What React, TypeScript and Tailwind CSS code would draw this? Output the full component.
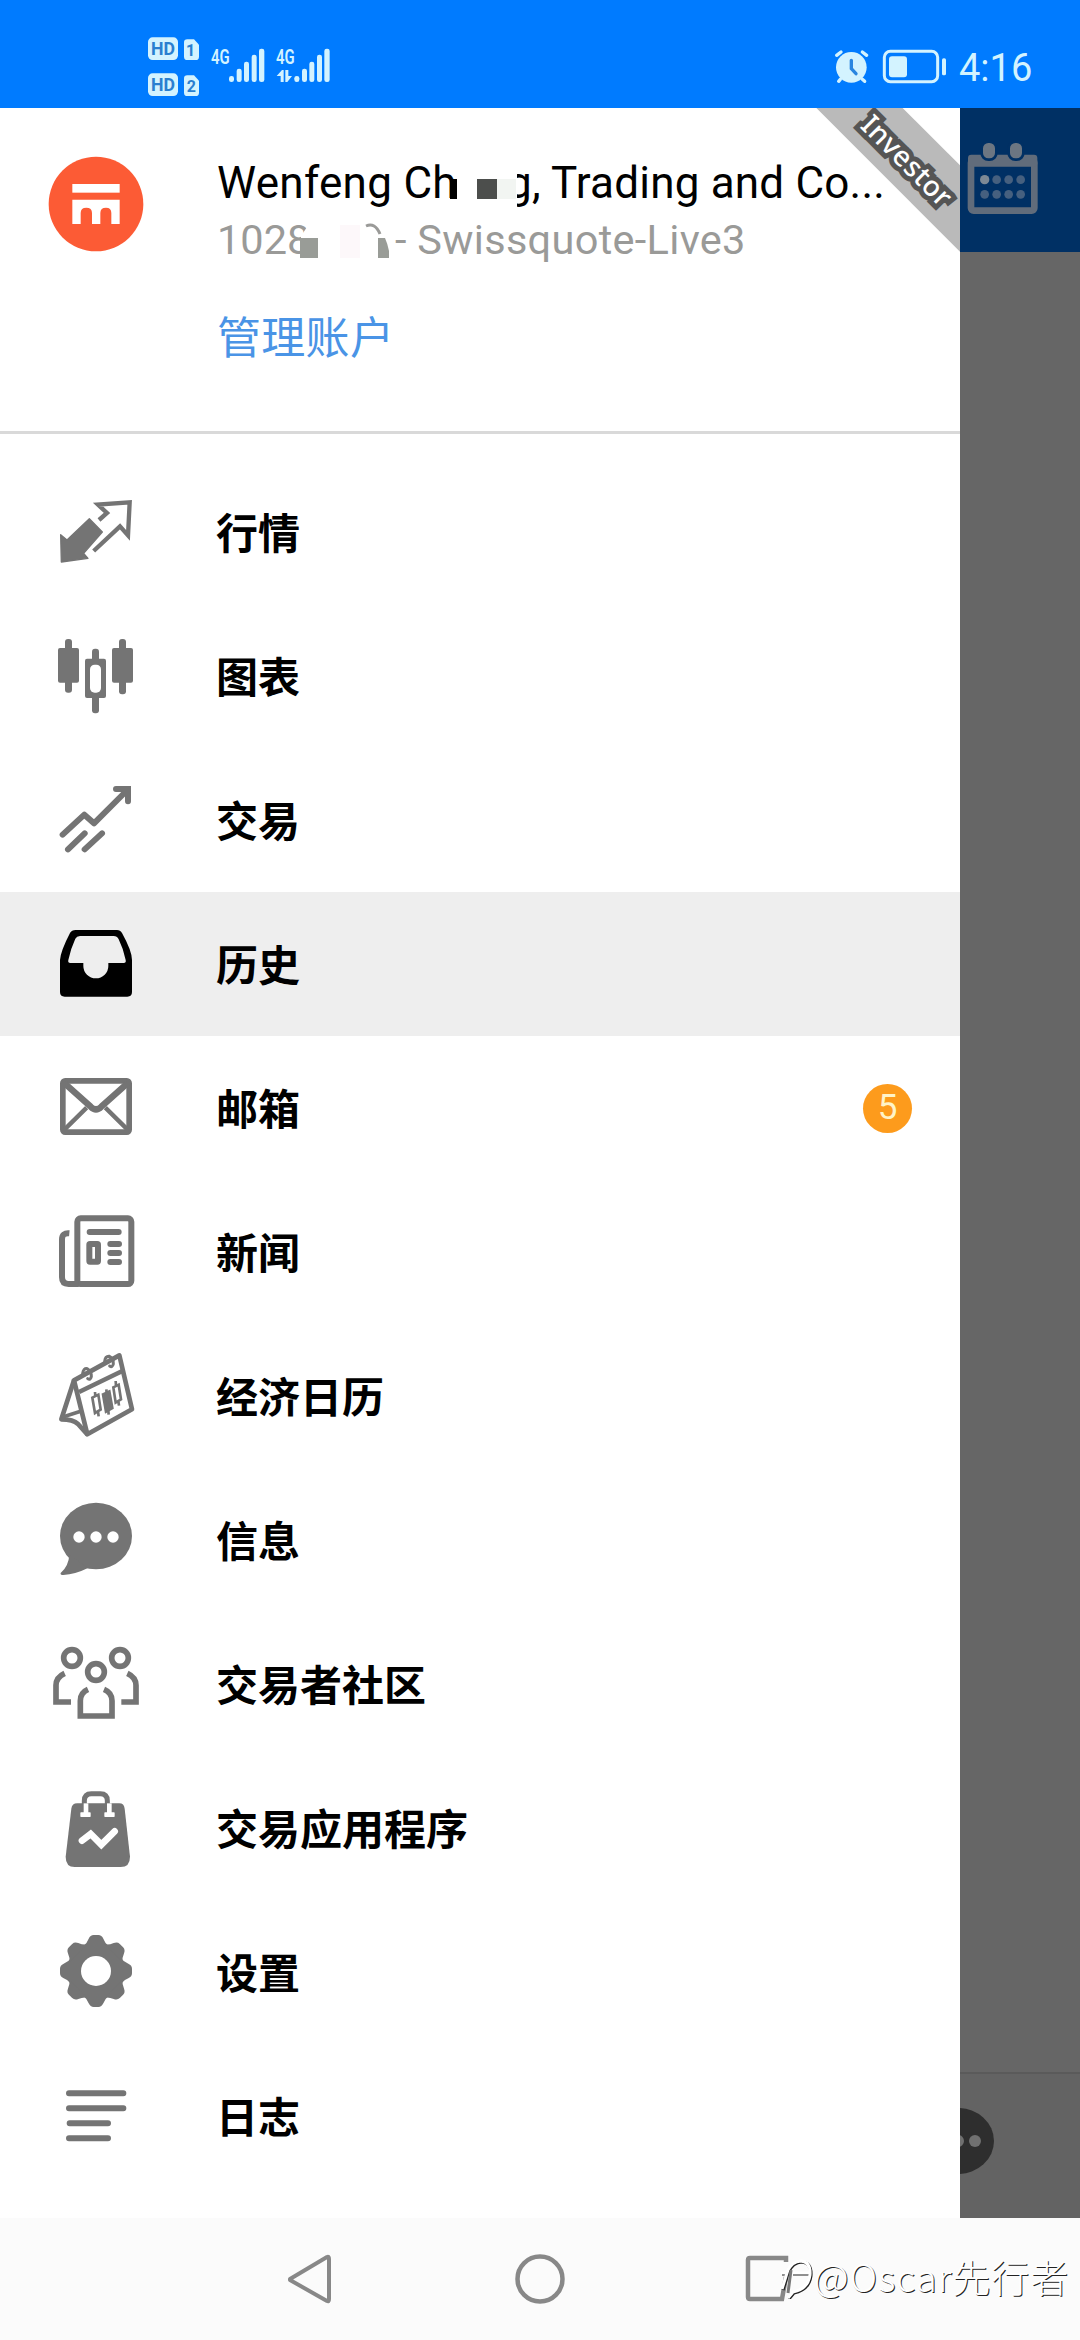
import React from 'react';

type IconProps = { children: React.ReactNode };

const Icon: React.FC<IconProps> = ({ children }) => (
  <svg viewBox="0 0 288 288" className="w-24 h-24 shrink-0" fill="currentColor">
    {children}
  </svg>
);

const QuotesIcon = () => (
  <Icon>
    <path d="M38 152 L57 168 L124 104 L163 144 L107 208 L120 223 L40 234 Z" stroke="currentColor" strokeWidth="4" strokeLinejoin="round" />
    <path d="M153 108 L177 87 L150 62 L245 55 L240 154 L216 127 L137 201" fill="none" stroke="currentColor" strokeWidth="13" />
  </Icon>
);

const ChartIcon = () => (
  <Icon>
    <rect x="30" y="60" width="63" height="104" rx="6" />
    <rect x="51" y="33" width="21" height="161" rx="9" />
    <rect x="111" y="92" width="63" height="118" rx="6" />
    <rect x="132" y="62" width="21" height="194" rx="9" />
    <rect x="126" y="110" width="33" height="84" rx="14" fill="#fff" />
    <rect x="192" y="60" width="63" height="104" rx="6" />
    <rect x="213" y="33" width="21" height="166" rx="9" />
  </Icon>
);

const TradeIcon = () => (
  <Icon>
    <g fill="none" stroke="currentColor" strokeWidth="18" strokeLinecap="round">
      <path d="M44 188 L109 128 L138 154 L238 54" strokeLinejoin="round" />
      <path d="M204 51 H240 V88" />
      <path d="M60 232 L110 184 M110 232 L162 184" />
    </g>
  </Icon>
);

const HistoryIcon = () => (
  <Icon>
    <path
      fillRule="evenodd"
      d="M83 42 H207 Q217 42 222 51 Q252 105 252 132 V228 Q252 242 238 242 H50 Q36 242 36 228 V132 Q38 105 66 51 Q71 42 83 42 Z M96 60 Q86 60 82 68 Q68 98 61 132 Q59 141 67 141 H106 V150 A37.5 37 0 0 0 181 150 V141 H227 Q235 141 233 132 Q226 98 212 70 Q207 60 197 60 Z"
    />
  </Icon>
);

const MailIcon = () => (
  <Icon>
    <g fill="none" stroke="currentColor">
      <rect x="44.5" y="62.5" width="199" height="154" rx="7" strokeWidth="17" />
      <path d="M50 70 L128 140 Q144 156 160 140 L238 70" strokeWidth="19" />
      <path d="M116 143 L50 208 M172 143 L238 208" strokeWidth="13" />
    </g>
  </Icon>
);

const NewsIcon = () => (
  <Icon>
    <g fill="none" stroke="currentColor" strokeWidth="18">
      <rect x="88" y="43" width="162" height="197" rx="10" />
      <path d="M64 88 Q42 86 42 106 V220 Q42 240 62 240 H92" />
      <path d="M125 84 H212 M187 120 H213 M187 147 H213 M187 174 H213" strokeLinecap="round" />
      <rect x="124" y="120" width="26" height="53" rx="2" />
    </g>
  </Icon>
);

const CalendarIcon = () => (
  <Icon>
    <g fill="none" stroke="currentColor" strokeWidth="14" strokeLinejoin="round">
      <path d="M78 97 L214 22 L252 184 L118 259 Z" />
      <path d="M93 132 L223 69" />
      <path d="M78 97 L40 214 Q76 214 90 228 L118 259" />
      <path d="M42 208 L98 190" strokeWidth="11" />
    </g>
    <g fill="none" stroke="currentColor" strokeWidth="9" strokeLinecap="round">
      <path d="M104 76 Q106 60 118 62 Q131 70 130 86 Q127 98 119 92" />
      <path d="M170 40 Q172 24 184 25 Q197 32 196 48 Q193 60 185 54" />
    </g>
    <g fill="none" stroke="currentColor" strokeWidth="8">
      <path d="M133 149 L151 140 L158 185 L141 195 Z M141 132 L142 144 M150 190 L152 205" />
      <path d="M165 139 L184 130 L193 180 L174 191 Z" fill="currentColor" />
      <path d="M175 124 L182 200" />
      <path d="M196 118 L212 110 L219 154 L203 164 Z M203 99 L204 114 M211 159 L213 173" />
    </g>
  </Icon>
);

const MessageIcon = () => (
  <Icon>
    <ellipse cx="144" cy="132" rx="108" ry="100" />
    <path d="M64 188 Q62 222 38 243 Q36 249 46 249 Q82 247 120 228 Z" />
    <g fill="#fff">
      <circle cx="93" cy="135" r="17" />
      <circle cx="144" cy="135" r="17" />
      <circle cx="195" cy="135" r="17" />
    </g>
  </Icon>
);

const CommunityIcon = () => (
  <Icon>
    <g fill="none" stroke="currentColor" strokeWidth="17">
      <circle cx="72" cy="66" r="25" />
      <circle cx="216" cy="66" r="25" />
      <circle cx="144" cy="108" r="25" />
      <path d="M50 112 Q24 124 24 148 V198 H69" />
      <path d="M238 112 Q264 124 264 148 V198 H220" />
      <path d="M120 160 Q97 170 97 194 V240 H192 V194 Q192 170 168 160" />
    </g>
  </Icon>
);

const AppsIcon = () => (
  <Icon>
    <path d="M88 70 H214 Q228 70 230 86 L246 230 Q246 261 218 261 H80 Q53 261 53 230 L70 86 Q72 70 88 70 Z" />
    <path d="M109 72 V62 Q109 41 130 41 H157 Q178 41 178 62 V72" fill="none" stroke="currentColor" strokeWidth="15" />
    <g fill="#fff">
      <rect x="107" y="70" width="14" height="30" />
      <rect x="97" y="97" width="31" height="14" rx="2" />
      <rect x="177" y="70" width="14" height="30" />
      <rect x="169" y="97" width="31" height="14" rx="2" />
    </g>
    <path d="M102 182 L128 162 L160 194 L200 154" fill="none" stroke="#fff" strokeWidth="20" strokeLinecap="round" />
  </Icon>
);

const SettingsIcon = () => (
  <Icon>
    <circle cx="144" cy="141" r="85" />
    {[0, 45, 90, 135, 180, 225, 270, 315].map((deg) => (
      <path
        key={deg}
        d="M106 66 Q117 58 122 44 Q127 33 137 33 H151 Q161 33 166 44 Q171 58 182 66 Z"
        transform={`rotate(${deg} 144 141)`}
      />
    ))}
    <circle cx="144" cy="141" r="45" fill="#fff" />
  </Icon>
);

const JournalIcon = () => (
  <Icon>
    <path
      d="M63 76 H226 M63 121 H226 M65 166 H180 M63 211 H180"
      stroke="currentColor"
      strokeWidth="18"
      strokeLinecap="round"
    />
  </Icon>
);

const MENU = [
  { label: '行情', icon: QuotesIcon },
  { label: '图表', icon: ChartIcon },
  { label: '交易', icon: TradeIcon },
  { label: '历史', icon: HistoryIcon, active: true },
  { label: '邮箱', icon: MailIcon, badge: 5 },
  { label: '新闻', icon: NewsIcon },
  { label: '经济日历', icon: CalendarIcon },
  { label: '信息', icon: MessageIcon },
  { label: '交易者社区', icon: CommunityIcon },
  { label: '交易应用程序', icon: AppsIcon },
  { label: '设置', icon: SettingsIcon },
  { label: '日志', icon: JournalIcon },
];

const StatusBar = () => (
  <div className="h-[108px] bg-[#007bff] text-[#d3f3ff] flex items-start justify-between pl-[120px] pr-[50px] pt-5">
    <svg viewBox="0 0 720 264" className="w-60 h-[88px]" fill="currentColor">
      <rect x="84" y="52" width="90" height="68" rx="14" />
      <rect x="84" y="160" width="90" height="68" rx="14" />
      <path d="M202 58 H222 L237 74 V110 Q237 120 227 120 H202 Q192 120 192 110 V68 Q192 58 202 58 Z" />
      <path d="M202 166 H222 L237 182 V218 Q237 228 227 228 H202 Q192 228 192 218 V176 Q192 166 202 166 Z" />
      <g fill="#2a7fd0" fontFamily="Roboto, sans-serif" fontWeight="700" textAnchor="middle">
        <text x="129" y="105" fontSize="54" textLength="72" lengthAdjust="spacingAndGlyphs">HD</text>
        <text x="129" y="213" fontSize="54" textLength="72" lengthAdjust="spacingAndGlyphs">HD</text>
        <text x="212" y="108" fontSize="48">1</text>
        <text x="214" y="216" fontSize="48">2</text>
      </g>
      <g fontFamily="Roboto, sans-serif" fontWeight="600" fontSize="58">
        <text x="273" y="131" textLength="56" lengthAdjust="spacingAndGlyphs">4G</text>
        <text x="468" y="131" textLength="56" lengthAdjust="spacingAndGlyphs">4G</text>
      </g>
      {[0, 196].map((dx) => (
        <g key={dx} transform={`translate(${dx} 0)`}>
          <rect x="327" y="168" width="15" height="18" rx="7" />
          <rect x="350" y="146" width="15" height="40" rx="7" />
          <rect x="372" y="125" width="15" height="61" rx="7" />
          <rect x="395" y="104" width="15" height="82" rx="7" />
          <rect x="417" y="86" width="16" height="100" rx="7" />
        </g>
      ))}
      <path d="M470 168 L486 150 H491 V186 H482 V168 Z M496 150 H505 V168 H516 L502 186 H496 Z" />
    </svg>
    <div className="flex items-start gap-[7px] mt-7">
      <svg viewBox="0 0 360 120" className="w-[120px] h-10" fill="currentColor">
        <circle cx="58" cy="58" r="46" />
        <g fill="none" stroke="currentColor" strokeWidth="10" strokeLinecap="round">
          <path d="M14 22 L27 12 M91 12 L104 22 M25 94 L20 100 M91 94 L98 100" />
          <path d="M58 37 V62 L72 77" stroke="#2a86e0" />
        </g>
        <rect x="157" y="10" width="160" height="91" rx="18" fill="none" stroke="currentColor" strokeWidth="9" />
        <rect x="171" y="25" width="54" height="63" rx="9" />
        <rect x="330" y="31" width="12" height="51" rx="5" />
      </svg>
      <span className="w-[71px] font-[Roboto,sans-serif] text-[38px] leading-[41px] whitespace-nowrap">4:16</span>
    </div>
  </div>
);

const AccountHeader = () => (
  <div className="relative h-[326px] border-b-[3px] border-[#d9d9d9] pl-12 pt-12 flex items-start overflow-hidden shrink-0">
    <svg viewBox="0 0 288 288" className="w-24 h-24 shrink-0">
      <circle cx="144" cy="144" r="142" fill="#fc5b35" />
      <rect x="73" y="84" width="142" height="26" fill="#fff" />
      <path d="M73 131 H215 V204 H190 V171 Q190 155 174 155 Q157 155 157 171 V204 H132 V171 Q132 155 115 155 Q98 155 98 171 V204 H73 Z" fill="#fff" />
    </svg>
    <div className="ml-[73px] font-[Roboto,sans-serif] whitespace-nowrap">
      <div className="relative flex h-[54px] text-[44px] leading-[54px] text-black">
        <span className="w-[290px] tracking-[0.3px]">Wenfeng Ch</span>
        <span className="tracking-[0.2px]">g, Trading and Co...</span>
        {/* masked characters */}
        <svg viewBox="0 0 80 54" className="absolute left-[230px] top-0 w-20 h-[54px]">
          <rect x="9" y="0" width="61" height="54" fill="#fff" />
          <rect x="3" y="23" width="7" height="20" fill="#000" />
          <rect x="30" y="23" width="20" height="20" fill="#4c4e4c" />
          <rect x="50" y="23" width="19" height="20" fill="#f2f5f2" />
        </svg>
      </div>
      <div className="relative flex h-[54px] text-[41.5px] leading-[60px] text-[#9a9a98]">
        <span className="w-[178px]">1028</span>
        <span className="tracking-[0.3px]">- Swissquote-Live3</span>
        <svg viewBox="0 0 90 54" className="absolute left-[82px] top-0 w-[90px] h-[54px]">
          <path d="M10 14 L2 26 V50 H24 V0 H10 Z" fill="#fff" />
          <rect x="1" y="28" width="18" height="20" fill="#999c97" />
          <rect x="41" y="15" width="20" height="33" fill="#fdf8fa" />
          <path d="M67 16 Q76 12 81 24" fill="none" stroke="#9a9a98" strokeWidth="3" />
          <path d="M79 28 H86 Q90 37 91 48 H79 Z" fill="#999c97" />
        </svg>
      </div>
      <a
        href="#accounts"
        className="block mt-[39px] text-[44px] leading-[64px] text-[#4a94e6] tracking-[0.3px] font-['Noto_Sans_CJK_SC',sans-serif]"
      >
        管理账户
      </a>
    </div>
    {/* Corner ribbon */}
    <div className="absolute left-[769px] top-[19px] w-[280px] h-[61px] rotate-45 bg-[#bababa] flex items-center justify-center">
      <span className="mt-1 ml-0.5 font-['Noto_Sans',sans-serif] font-medium text-[28px] leading-10 tracking-[0.5px] text-white [-webkit-text-stroke:10px_#555] [paint-order:stroke_fill]">
        Investor
      </span>
    </div>
  </div>
);

const Drawer = () => (
  <aside className="w-[960px] bg-white flex flex-col shrink-0">
    <AccountHeader />
    <nav className="pt-[26px] flex flex-col">
      {MENU.map(({ label, icon: ItemIcon, active, badge }) => (
        <a
          key={label}
          href="#menu"
          className={`h-36 flex items-center px-12 ${active ? 'bg-[#eeeeee] text-black' : 'text-[#747474]'}`}
        >
          <ItemIcon />
          <span className="ml-[72px] mb-[3px] text-[42px] leading-[60px] font-bold text-black font-['Noto_Sans_CJK_SC',sans-serif]">
            {label}
          </span>
          {badge && (
            <span className="ml-auto w-[49px] h-[49px] rounded-full bg-[#fd9b1c] text-[#fff3c8] text-[35px] flex items-center justify-center font-[Roboto,sans-serif]">
              {badge}
            </span>
          )}
        </a>
      ))}
    </nav>
  </aside>
);

const DimmedPage = () => (
  <main className="flex-1 bg-[#666666] flex flex-col overflow-hidden">
    <div className="h-36 bg-[#003064] pt-8">
      <svg viewBox="0 0 240 240" className="w-20 h-20">
        <rect x="33" y="60" width="190" height="152" rx="8" fill="none" stroke="#616c7b" strokeWidth="20" />
        <rect x="24" y="44" width="208" height="36" rx="10" fill="#616c7b" />
        <g fill="#6c7682" stroke="#003064" strokeWidth="8">
          <rect x="65" y="5" width="44" height="54" rx="20" />
          <rect x="146" y="5" width="44" height="54" rx="20" />
        </g>
        <g fill="#46607f">
          <circle cx="74" cy="119" r="14" fill="#7d8995" />
          <circle cx="110" cy="119" r="13" />
          <circle cx="146" cy="119" r="13" />
          <circle cx="182" cy="119" r="13" />
          <circle cx="74" cy="163" r="13" />
          <circle cx="110" cy="163" r="13" />
          <circle cx="146" cy="163" r="13" />
          <circle cx="182" cy="163" r="13" />
        </g>
      </svg>
    </div>
    <div className="mt-auto h-[146px] border-t-2 border-[#5a5a5a] bg-[#636363] pt-8">
      <svg viewBox="0 0 36 72" className="w-9 h-[72px]">
        <ellipse cx="-2" cy="35" rx="36" ry="33" fill="#2e2e2e" />
        <circle cx="-2" cy="35" r="6" fill="#707070" />
        <circle cx="15" cy="35" r="6" fill="#707070" />
      </svg>
    </div>
  </main>
);

const NavBar = () => (
  <footer className="relative h-[122px] bg-[#fbfbfb] flex justify-center items-center gap-[178px] text-[#888888]">
    <svg viewBox="0 0 52 52" className="w-[52px] h-[52px]" fill="none" stroke="currentColor" strokeWidth="4">
      <path d="M6 26 L43 4 Q45 3 45 6 V46 Q45 49 43 48 L6 27 Z" strokeLinejoin="round" />
    </svg>
    <svg viewBox="0 0 52 52" className="w-[52px] h-[52px]" fill="none" stroke="currentColor" strokeWidth="4.5">
      <circle cx="26" cy="26" r="22.5" />
    </svg>
    <svg viewBox="0 0 52 52" className="w-[52px] h-[52px]" fill="none" stroke="currentColor" strokeWidth="4.5">
      <path d="M42 9 V5 H6 Q4 5 4 7 V44 Q4 46 6 46 H38 L42 24" />
    </svg>
    {/* Watermark */}
    <div className="absolute left-[778px] top-[33px] flex items-center text-white">
      <svg viewBox="0 0 36 46" className="w-9 h-[46px]" fill="none" strokeWidth="3">
        {['#222222', '#ffffff'].map((color, i) => (
          <g key={color} stroke={color} transform={i === 0 ? 'translate(1 1)' : undefined}>
            <path d="M3 20 H9 L4 36 M9 19 Q14 8 23 8 Q33 9 32 22 Q30 36 15 39 L10 45" />
            <path d="M14 20 H32" />
          </g>
        ))}
        <path d="M13 17 L10 40" stroke="#777777" />
      </svg>
      <span className="text-[38px] leading-[50px] tracking-[1px] whitespace-nowrap font-light font-['Noto_Sans_CJK_SC',sans-serif] [text-shadow:1px_1px_0_#222]">
        @Oscar先行者
      </span>
    </div>
  </footer>
);

export default function App() {
  return (
    <div className="w-[1080px] h-[2340px] flex flex-col overflow-hidden bg-white">
      <StatusBar />
      <div className="h-[2110px] flex">
        <Drawer />
        <DimmedPage />
      </div>
      <NavBar />
    </div>
  );
}
